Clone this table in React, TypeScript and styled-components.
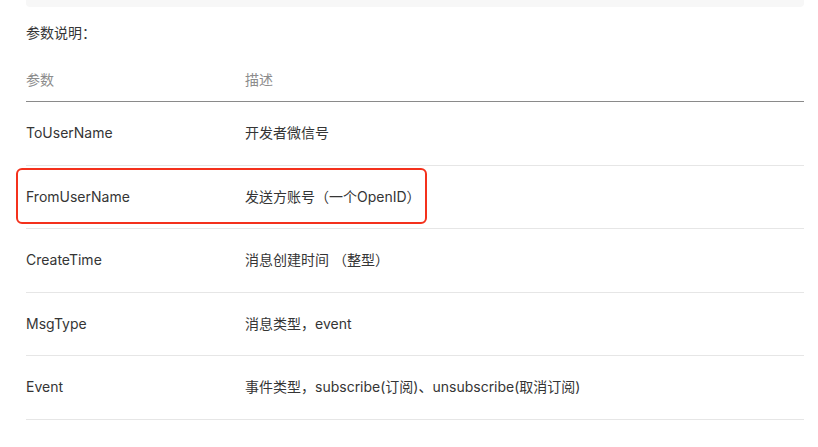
import React from 'react';
import styled, { createGlobalStyle } from 'styled-components';

const GlobalStyle = createGlobalStyle`
	body {
		margin: 0;
		background: #fff;
		font-family: Inter, 'Noto Sans CJK SC', sans-serif;
		color: #353535;
	}
`;

const Page = styled.div`
	padding: 0 14px 0 26px;
`;

const CodeBox = styled.div`
	height: 7px;
	background-color: #f7f7f7;
	border-radius: 0 0 4px 4px;
`;

const Caption = styled.p`
	margin: 16px 0 0;
	font-size: 14px;
	line-height: 20px;
`;

const Table = styled.table`
	width: 100%;
	margin-top: 16px;
	border-collapse: collapse;
	font-size: 14px;
	line-height: 20px;
`;

const HeadCell = styled.th`
	padding: 11px 0;
	text-align: left;
	font-weight: normal;
	color: #8c8c8c;
	border-bottom: 1px solid #8a8a8a;
	width: ${({ $width }: { $width?: string }) => $width || 'auto'};
`;

const Cell = styled.td`
	position: relative;
	padding: 21.25px 0;
	border-bottom: 1px solid #e6e6e6;
`;

// red annotation drawn over the row
const Highlight = styled.div`
	position: absolute;
	left: -10px;
	top: 2px;
	width: 411px;
	height: 56px;
	box-sizing: border-box;
	border: 2px solid #f4311c;
	border-radius: 6px;
	pointer-events: none;
`;

const rows = [
	{ name: 'ToUserName', desc: '开发者微信号' },
	{ name: 'FromUserName', desc: '发送方账号（一个OpenID）', marked: true },
	{ name: 'CreateTime', desc: '消息创建时间 （整型）' },
	{ name: 'MsgType', desc: '消息类型，event' },
	{ name: 'Event', desc: '事件类型，subscribe(订阅)、unsubscribe(取消订阅)' },
];

export default function App() {
	return (
		<Page>
			<GlobalStyle />
			<CodeBox />
			<Caption>参数说明：</Caption>
			<Table>
				<thead>
					<tr>
						<HeadCell $width='219px'>参数</HeadCell>
						<HeadCell>描述</HeadCell>
					</tr>
				</thead>
				<tbody>
					{rows.map((row) => (
						<tr key={row.name}>
							<Cell>
								{row.marked && <Highlight />}
								{row.name}
							</Cell>
							<Cell>{row.desc}</Cell>
						</tr>
					))}
				</tbody>
			</Table>
		</Page>
	);
}
